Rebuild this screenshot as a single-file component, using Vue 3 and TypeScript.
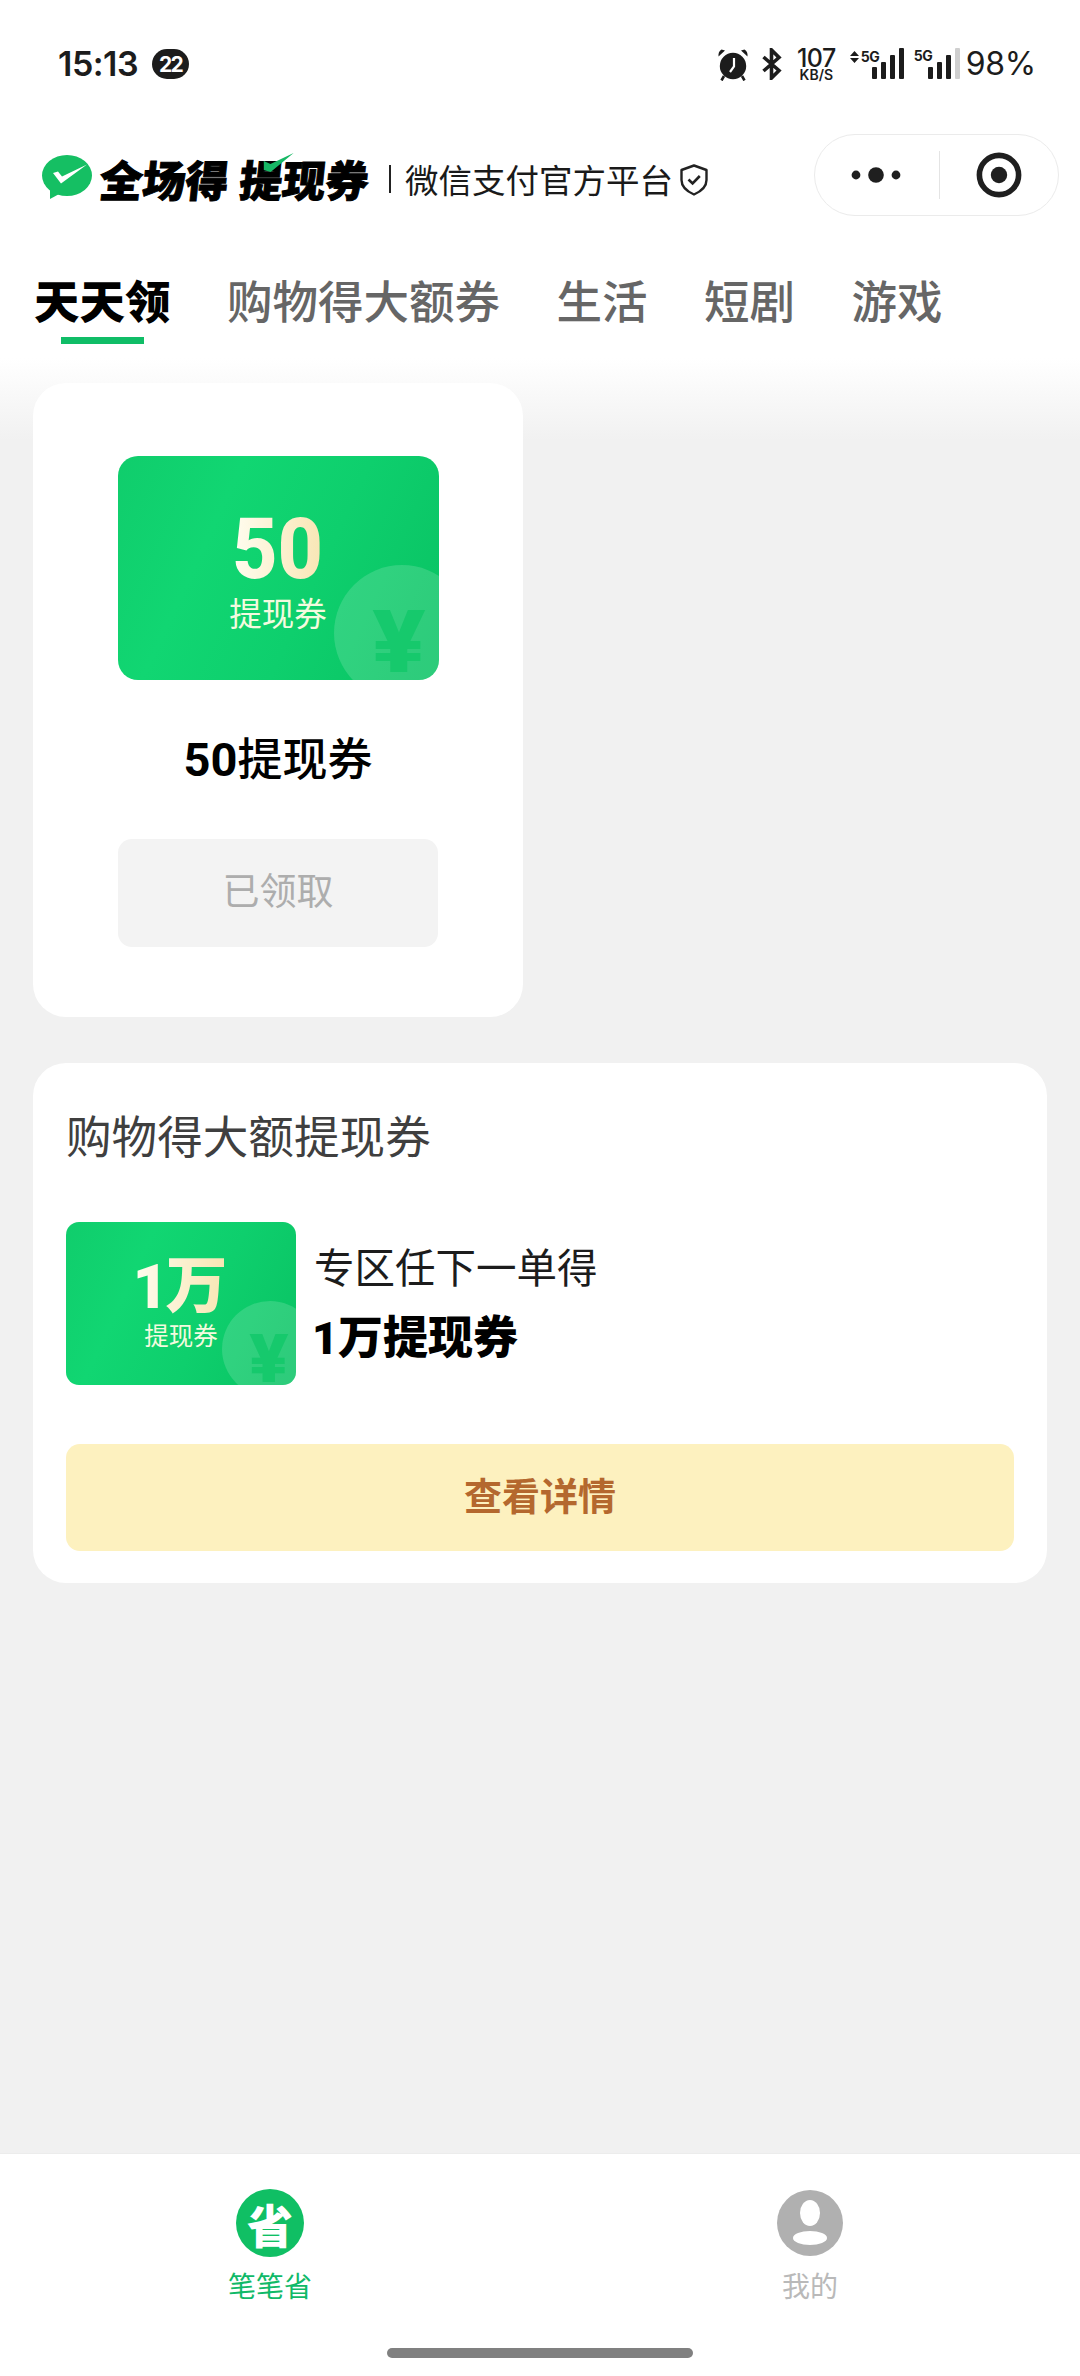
<script setup lang="ts">
interface Tab { label: string; active?: boolean }
const tabs: Tab[] = [
  { label: '天天领', active: true },
  { label: '购物得大额券' },
  { label: '生活' },
  { label: '短剧' },
  { label: '游戏' },
]
const signalA: number[] = [12, 17, 24, 31]
const signalB: number[] = [12, 17, 24]
</script>

<template>
  <div class="page">
    <div class="status">
      <div class="status-left">
        <span class="time">15:13</span>
        <span class="badge">22</span>
      </div>
      <div class="status-right">
        <svg class="alarm" width="32" height="33" viewBox="0 0 32 33">
          <circle cx="16" cy="18" r="13.2" fill="#1c1c1c" />
          <path d="M1.5 8.5 L8 2.5 L4.5 1.5 Q1 3.5 1.5 8.5Z M30.5 8.5 L24 2.5 L27.5 1.5 Q31 3.5 30.5 8.5Z" fill="#1c1c1c" />
          <path d="M7 28 L4.5 32.5 M25 28 L27.5 32.5" stroke="#1c1c1c" stroke-width="2.6" />
          <path d="M17 10 V18.5 L13 24" stroke="#fff" stroke-width="2.2" fill="none" />
        </svg>
        <svg class="bt" width="20" height="32" viewBox="0 0 20 32">
          <path d="M1.5 9 L17 22.5 L9.5 30 V2 L17 9.5 L1.5 23" fill="none" stroke="#1c1c1c" stroke-width="3.6" />
        </svg>
        <div class="speed">
          <span class="speed-num">107</span>
          <span class="speed-unit">KB/S</span>
        </div>
        <div class="signal signal-a">
          <svg class="updown" width="9" height="12" viewBox="0 0 9 12">
            <path d="M4.5 0 L9 5 H0Z M0 7 H9 L4.5 12Z" fill="#1c1c1c" />
          </svg>
          <span class="five-g">5G</span>
          <span class="bars">
            <i v-for="h in signalA" :key="h" :style="{ height: h + 'px' }"></i>
          </span>
        </div>
        <div class="signal signal-b">
          <span class="five-g high">5G</span>
          <span class="bars">
            <i v-for="h in signalB" :key="h" :style="{ height: h + 'px' }"></i>
            <i class="off"></i>
          </span>
        </div>
        <span class="battery">98%</span>
      </div>
    </div>

    <div class="nav">
      <div class="brand">
        <svg class="wx" width="50" height="44" viewBox="0 0 50 44">
          <ellipse cx="25" cy="20.5" rx="25" ry="20.5" fill="#15bf63" />
          <path d="M8 34 L8 44 L19 38Z" fill="#15bf63" />
          <path d="M11 18 L16 16.5 L20 21.5 L45 9.5 L19 28.5Z" fill="#fff" />
        </svg>
        <span class="logo-word">全场得</span>
        <span class="logo-word second">
          提现券
          <svg class="logo-check" width="32" height="20" viewBox="0 0 32 20">
            <path d="M1 8 L8 11 L30 0 L9 19 L2 17Z" fill="#17b865" />
          </svg>
        </span>
        <span class="brand-sep"></span>
        <span class="brand-sub">微信支付官方平台</span>
        <svg class="shield" width="28" height="32" viewBox="0 0 28 32">
          <path d="M14 1.5 L26.5 6 V16 Q26.5 25 14 30.5 Q1.5 25 1.5 16 V6Z" fill="none" stroke="#222" stroke-width="2.4" stroke-linejoin="round" />
          <path d="M8.5 15.5 L12.6 19.5 L19.8 12" fill="none" stroke="#222" stroke-width="2.6" />
        </svg>
      </div>
      <div class="capsule">
        <div class="capsule-side menu">
          <svg width="58" height="18" viewBox="0 0 58 18">
            <circle cx="9" cy="9" r="4.4" fill="#1f1f1f" />
            <circle cx="29" cy="9" r="7.8" fill="#1f1f1f" />
            <circle cx="49" cy="9" r="4.4" fill="#1f1f1f" />
          </svg>
        </div>
        <span class="capsule-line"></span>
        <div class="capsule-side">
          <svg width="46" height="46" viewBox="0 0 46 46">
            <circle cx="23" cy="23" r="19.6" fill="none" stroke="#1f1f1f" stroke-width="5.6" />
            <circle cx="23" cy="23" r="8.2" fill="#1f1f1f" />
          </svg>
        </div>
      </div>
    </div>

    <div class="tabs">
      <div v-for="t in tabs" :key="t.label" class="tab" :class="{ active: t.active }">
        <span class="tab-label">{{ t.label }}</span>
        <span class="tab-line"></span>
      </div>
    </div>

    <main class="content">
      <section class="card card-daily">
        <div class="coupon coupon-lg">
          <span class="coin-clip"><span class="coin"></span></span>
          <span class="coin-yen">¥</span>
          <span class="amount">50</span>
          <span class="coupon-name">提现券</span>
        </div>
        <div class="daily-title"><b>50</b>提现券</div>
        <div class="claimed">已领取</div>
      </section>

      <section class="card card-shop">
        <h2 class="shop-title">购物得大额提现券</h2>
        <div class="shop-row">
          <div class="coupon coupon-sm">
            <span class="coin-clip"><span class="coin"></span></span>
            <span class="coin-yen">¥</span>
            <span class="amount"><em>1</em>万</span>
            <span class="coupon-name">提现券</span>
          </div>
          <div class="shop-text">
            <span class="shop-line">专区任下一单得</span>
            <span class="shop-prize"><b>1</b>万提现券</span>
          </div>
        </div>
        <div class="detail">查看详情</div>
      </section>
    </main>

    <footer class="tabbar">
      <div class="tabbar-items">
        <div class="tabbar-item on">
          <div class="icon-box">
            <span class="round green">
              <span class="sheng">省</span>
            </span>
          </div>
          <span class="tabbar-label">笔笔省</span>
        </div>
        <div class="tabbar-item">
          <div class="icon-box">
            <svg width="66" height="66" viewBox="0 0 66 66">
              <circle cx="33" cy="33" r="33" fill="#b0b0b0" />
              <ellipse cx="33" cy="23" rx="10" ry="13" fill="#fff" />
              <ellipse cx="33" cy="48" rx="17" ry="7" fill="#fff" />
            </svg>
          </div>
          <span class="tabbar-label">我的</span>
        </div>
      </div>
      <span class="home"></span>
    </footer>
  </div>
</template>

<style>
html, body { margin: 0; padding: 0; background: #f1f1f1; }
</style>

<style scoped>
.page {
  width: 1080px;
  height: 2376px;
  display: flex;
  flex-direction: column;
  overflow: hidden;
  background: linear-gradient(#fff 358px, #f1f1f1 440px);
  font-family: "Noto Sans CJK SC", "Noto Sans", sans-serif;
  color: #111;
}

/* status bar */
.status {
  height: 134px;
  box-sizing: border-box;
  padding: 47px 44px 0 58px;
  display: flex;
  justify-content: space-between;
  align-items: flex-start;
  font-family: Inter, "Noto Sans", sans-serif;
  color: #1c1c1c;
}
.status-left { display: flex; align-items: center; gap: 14px; height: 34px; }
.time { font-size: 34px; font-weight: 600; letter-spacing: -0.5px; line-height: 34px; }
.badge {
  width: 37px; height: 30px; border-radius: 15px;
  background: #1c1c1c; color: #fff;
  display: flex; align-items: center; justify-content: center;
  font-size: 21px; font-weight: 700; letter-spacing: -1.5px;
}
.status-right { display: flex; align-items: flex-start; height: 34px; }
.alarm { margin-top: 1px; }
.bt { margin: 1px 0 0 13px; }
.speed { margin-left: 15px; width: 39px; display: flex; flex-direction: column; align-items: center; }
.speed-num { font-size: 25px; font-weight: 500; line-height: 22px; letter-spacing: -0.6px; }
.speed-unit { font-size: 14px; font-weight: 600; line-height: 12px; margin-top: 0; }
.signal { position: relative; display: flex; height: 32px; }
.signal-a { margin-left: 14px; width: 54px; }
.signal-b { margin-left: 10px; width: 46px; }
.updown { position: absolute; left: 0; top: 4px; }
.five-g {
  position: absolute; left: 11px; top: 3px;
  font-size: 14px; font-weight: 700; line-height: 14px; letter-spacing: -0.6px;
}
.five-g.high { left: 0; top: 2px; }
.bars { position: absolute; right: 0; bottom: 0; display: flex; align-items: flex-end; gap: 4.5px; }
.bars i { display: block; width: 4.5px; background: #1c1c1c; border-radius: 1px; }
.bars i.off { height: 31px; background: #cfcfcf; }
.battery { margin-left: 6px; font-size: 32px; font-weight: 400; line-height: 34px; margin-top: 0; letter-spacing: -0.3px; }

/* nav */
.nav {
  height: 82px;
  box-sizing: border-box;
  padding: 0 21px 0 42px;
  display: flex;
  align-items: center;
  justify-content: space-between;
}
.brand { display: flex; align-items: center; height: 48px; }
.wx { margin-top: 4px; }
.logo-word {
  position: relative;
  margin: 6px 0 0 8px;
  font-size: 43px;
  line-height: 46px;
  font-weight: 900;
  color: #000;
  transform: skewX(-6deg);
  -webkit-text-stroke: 1px #000;
  white-space: nowrap;
}
.logo-word.second { margin-left: 11px; }
.logo-check { position: absolute; left: 21px; top: -2px; }
.brand-sep { width: 2px; height: 28px; background: #222; margin: 8px 14px 0 20px; }
.brand-sub { font-size: 33.5px; line-height: 46px; font-weight: 400; color: #1a1a1a; margin-top: 7px; white-space: nowrap; }
.shield { margin: 9px 0 0 7px; }
.capsule {
  width: 245px; height: 82px;
  box-sizing: border-box;
  border: 1.5px solid #ebebeb;
  border-radius: 41px;
  background: #fff;
  display: flex;
  align-items: center;
  margin-top: -1px;
}
.capsule-side { flex: 1; display: flex; align-items: center; justify-content: center; }
.capsule-side.menu { flex: 0 0 124px; padding-right: 3px; box-sizing: border-box; }
.capsule-line { width: 1px; height: 48px; background: #e4e4e4; }

/* tabs */
.tabs {
  display: flex;
  gap: 56.5px;
  padding: 53px 0 0 34px;
  height: 167px;
  box-sizing: border-box;
}
.tab { display: flex; flex-direction: column; align-items: center; }
.tab-label { font-size: 45.5px; line-height: 60px; color: #666; font-weight: 500; white-space: nowrap; }
.tab-line { width: 83px; height: 7px; margin-top: 8px; background: transparent; }
.tab.active .tab-label { color: #000; font-weight: 900; }
.tab.active .tab-line { background: #10bd67; }

/* content */
.content {
  flex: 1;
  padding: 0 33px;
  display: flex;
  flex-direction: column;
  align-items: flex-start;
  gap: 46px;
}
.card { background: #fff; border-radius: 33px; box-sizing: border-box; }
.card-daily {
  width: 490px; height: 634px;
  padding-top: 73px;
  display: flex; flex-direction: column; align-items: center;
}
.coupon {
  position: relative;
  flex: none;
  display: flex; flex-direction: column; align-items: center;
  background: linear-gradient(115deg, #10cd6c 0%, #11d672 30%, #0ecf6d 60%, #09c263 100%);
}
.coupon-lg { width: 321px; height: 224px; border-radius: 20px; }
.coupon-sm { width: 230px; height: 163px; border-radius: 13px; }
.coin-clip { position: absolute; inset: 0; overflow: hidden; border-radius: inherit; }
.coin { position: absolute; border-radius: 50%; background: rgba(255, 255, 255, 0.15); }
.coin-yen { position: absolute; font-family: Roboto, sans-serif; font-weight: 900; color: rgba(18, 200, 106, 0.85); }
.coupon-lg .coin { width: 136px; height: 136px; left: 216px; top: 109px; }
.coupon-lg .coin-yen { font-size: 88px; line-height: 66px; left: 257px; top: 153px; transform: scaleX(1.12); }
.coupon-sm .coin { width: 96px; height: 96px; left: 156px; top: 79px; }
.coupon-sm .coin-yen { font-size: 66px; line-height: 50px; left: 185px; top: 113px; transform: scaleX(1.1); }
.amount {
  position: relative;
  font-family: Roboto, "Noto Sans CJK SC", sans-serif;
  font-weight: 800;
  background: linear-gradient(90deg, #fffdf0, #f8e6b4);
  -webkit-background-clip: text;
  background-clip: text;
  color: transparent;
  white-space: nowrap;
}
.coupon-lg .amount { font-size: 86px; line-height: 76px; margin-top: 55px; transform: scaleX(0.92); }
.coupon-sm .amount { font-size: 62px; line-height: 62px; margin-top: 34px; margin-left: -5px; letter-spacing: -3px; font-weight: 900; }
.amount em { font-style: normal; }
.coupon-name { position: relative; color: #f3fbdf; white-space: nowrap; }
.coupon-lg .coupon-name { font-size: 32.5px; line-height: 40px; margin-top: 5px; }
.coupon-sm .coupon-name { font-size: 24.5px; line-height: 28px; margin-top: 3px; }

.daily-title {
  margin-top: 47px; height: 60px;
  font-size: 45px; line-height: 60px; font-weight: 500; color: #000;
  white-space: nowrap;
}
.daily-title b { font-family: Roboto, sans-serif; font-weight: 700; font-size: 47px; }
.claimed {
  margin-top: 52px;
  width: 320px; height: 108px;
  box-sizing: border-box;
  padding-bottom: 9px;
  border-radius: 14px;
  background: #f3f3f3;
  color: #adadad;
  font-size: 37px;
  display: flex; align-items: center; justify-content: center;
}

.card-shop { width: 1014px; height: 520px; padding: 41px 33px 0; }
.shop-title { margin: 0; font-size: 45.6px; line-height: 60px; font-weight: 400; color: #3f3f3f; white-space: nowrap; }
.shop-row { margin-top: 58px; display: flex; align-items: flex-start; }
.shop-text { margin-left: 17px; display: flex; flex-direction: column; }
.shop-line { margin-top: 17px; margin-left: 1px; font-size: 40.5px; line-height: 54px; color: #1c1c1c; white-space: nowrap; }
.shop-prize { margin-top: 15px; margin-left: -1px; font-size: 45px; line-height: 54px; font-weight: 900; color: #000; white-space: nowrap; }
.shop-prize b { font-family: Roboto, sans-serif; font-weight: 900; }
.detail {
  margin-top: 59px;
  height: 107px;
  box-sizing: border-box;
  padding-bottom: 9px;
  border-radius: 14px;
  background: #fdf1bf;
  color: #b4682e;
  font-size: 38px;
  font-weight: 700;
  display: flex; align-items: center; justify-content: center;
}

/* tab bar */
.tabbar {
  height: 223px;
  box-sizing: border-box;
  background: #fff;
  border-top: 1px solid #ececec;
  display: flex; flex-direction: column; align-items: center;
}
.tabbar-items { width: 100%; display: flex; padding-top: 35px; }
.tabbar-item { flex: 1; display: flex; flex-direction: column; align-items: center; }
.icon-box { height: 68px; display: flex; align-items: center; justify-content: center; }
.round { width: 68px; height: 68px; border-radius: 50%; display: flex; align-items: center; justify-content: center; }
.round.green { background: #10bf64; }
.sheng { color: #fff; font-size: 46px; font-weight: 900; line-height: 68px; }
.tabbar-label { margin-top: 10px; margin-bottom: 2px; font-size: 28px; line-height: 36px; color: #b9b9b9; }
.tabbar-item.on .tabbar-label { color: #10b968; }
.home { margin-top: 43px; width: 306px; height: 10px; border-radius: 5px; background: #808080; }
</style>
